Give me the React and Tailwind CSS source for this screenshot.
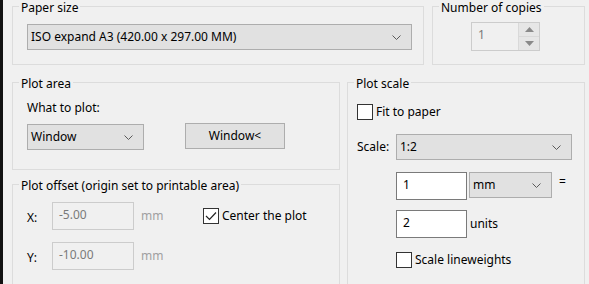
import React from 'react';

function GroupBox({ title, className, children }) {
  return (
    <div className={`relative border border-[#dcdcdc] ${className}`}>
      <span className="absolute top-[-5px] left-[6px] px-[2px] bg-[#f0f0f0] leading-[12px] whitespace-nowrap">
        {title}
      </span>
      {children}
    </div>
  );
}

function Chevron() {
  return (
    <svg width="9" height="5" viewBox="0 0 9 5" className="shrink-0">
      <path d="M0.5 0.5 L4.5 4.5 L8.5 0.5" fill="none" stroke="#5a5a5a" strokeWidth="1" />
    </svg>
  );
}

function Dropdown({ value, className }) {
  return (
    <div className={`flex items-center justify-between h-[26px] bg-[#e1e1e1] border border-[#adadad] pl-[3px] pr-[10px] ${className}`}>
      <span className="whitespace-nowrap">{value}</span>
      <Chevron />
    </div>
  );
}

function TextBox({ value, disabled, className }) {
  return (
    <div
      className={`flex items-center h-[28px] pl-[6px] pb-[2px] border ${
        disabled ? 'bg-[#f0f0f0] border-[#cccccc] text-[#7a7a7a]' : 'bg-white border-[#7a7a7a]'
      } ${className}`}
    >
      {value}
    </div>
  );
}

function CheckBox({ checked, label, className }) {
  return (
    <div className={`flex items-center ${className}`}>
      <div className="w-[16px] h-[16px] border border-[#333333] bg-white flex items-center justify-center shrink-0">
        {checked && (
          <svg width="12" height="10" viewBox="0 0 12 10">
            <path d="M1 5 L4.5 8.5 L11 1.5" fill="none" stroke="#222" strokeWidth="1.2" />
          </svg>
        )}
      </div>
      <span className="ml-[3px] whitespace-nowrap">{label}</span>
    </div>
  );
}

export default function App() {
  return (
    <div
      className="flex w-[589px] h-[284px] bg-[#f0f0f0] overflow-hidden text-[12px] leading-[16px] text-black"
      style={{ fontFamily: '"Noto Sans", "Liberation Sans", sans-serif' }}
    >
      <div className="w-[3px] h-full bg-[#111111] shrink-0" />

      <div className="pl-[9px] pt-[6px] flex flex-col">
        {/* Row 1 */}
        <div className="flex gap-[8px]">
          <GroupBox title="Paper size" className="w-[412px] h-[59px] pt-[17px] pl-[14px]">
            <Dropdown value="ISO expand A3 (420.00 x 297.00 MM)" className="w-[385px]" />
          </GroupBox>

          <GroupBox title="Number of copies" className="w-[153px] h-[59px] pt-[15px] pl-[38px]">
            <div className="flex w-[69px] h-[29px] border border-[#cccccc] bg-[#f0f0f0]">
              <div className="flex-1 pl-[6px] pt-[4px] text-[#7a7a7a]">1</div>
              <div className="w-[21px] flex flex-col border-l border-[#d9d9d9]">
                <div className="flex-1 flex items-center justify-center bg-[#e6e6e6] border-b border-[#d9d9d9]">
                  <svg width="9" height="5" viewBox="0 0 9 5">
                    <path d="M0 5 L4.5 0 L9 5 Z" fill="#8a8a8a" />
                  </svg>
                </div>
                <div className="flex-1 flex items-center justify-center bg-[#e6e6e6]">
                  <svg width="9" height="5" viewBox="0 0 9 5">
                    <path d="M0 0 L4.5 5 L9 0 Z" fill="#8a8a8a" />
                  </svg>
                </div>
              </div>
            </div>
          </GroupBox>
        </div>

        {/* Row 2 */}
        <div className="flex gap-[7px] mt-[17px]">
          <div className="flex flex-col w-[328px]">
            <GroupBox title="Plot area" className="h-[88px] pl-[14px] pt-[17px]">
              <div className="h-[16px]">What to plot:</div>
              <div className="flex items-start mt-[7px]">
                <Dropdown value="Window" className="w-[117px] mt-[1px]" />
                <button className="ml-[41px] w-[100px] h-[26px] bg-[#e1e1e1] border border-[#adadad]">
                  Window&lt;
                </button>
              </div>
            </GroupBox>

            <GroupBox title="Plot offset (origin set to printable area)" className="mt-[14px] h-[120px] pl-[14px] pt-[17px]">
              <div className="flex items-center">
                <span className="w-[25px] pt-[4px]">X:</span>
                <TextBox value="-5.00" disabled className="w-[82px]" />
                <span className="ml-[7px] w-[62px] text-[#a0a0a0]">mm</span>
                <CheckBox checked label="Center the plot" />
              </div>
              <div className="flex items-center mt-[12px]">
                <span className="w-[25px] pt-[4px]">Y:</span>
                <TextBox value="-10.00" disabled className="w-[82px]" />
                <span className="ml-[7px] text-[#a0a0a0]">mm</span>
              </div>
            </GroupBox>
          </div>

          <GroupBox title="Plot scale" className="w-[238px] h-[220px] pl-[9px] pt-[21px]">
            <CheckBox label="Fit to paper" />
            <div className="flex items-center mt-[14px]">
              <span className="w-[39px]">Scale:</span>
              <Dropdown value="1:2" className="w-[176px]" />
            </div>
            <div className="flex items-start mt-[12px] ml-[39px]">
              <TextBox value="1" className="w-[71px]" />
              <Dropdown value="mm" className="w-[83px] ml-[2px]" />
              <span className="ml-[7px] mt-[2px]">=</span>
            </div>
            <div className="flex items-center mt-[10px] ml-[39px]">
              <TextBox value="2" className="w-[71px]" />
              <span className="ml-[3px]">units</span>
            </div>
            <CheckBox label="Scale lineweights" className="mt-[14px] ml-[39px]" />
          </GroupBox>
        </div>
      </div>
    </div>
  );
}
